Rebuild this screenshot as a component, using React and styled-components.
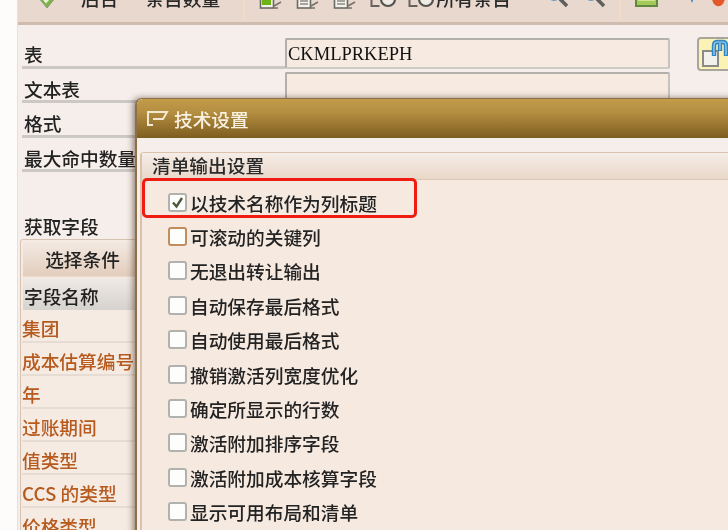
import React from 'react';
import styled, { createGlobalStyle } from 'styled-components';

//? Styling
const GlobalStyle = createGlobalStyle`
  html, body {
    margin: 0;
    padding: 0;
    background: #fdfcfb;
  }
`;

const Screen = styled.div`
  position: relative;
  width: 728px;
  height: 530px;
  overflow: hidden;
  padding-left: 17px;
  box-sizing: border-box;
  background: #fdfcfb;
  font-family: "Noto Sans CJK SC", "Noto Sans", sans-serif;
  font-size: 18.7px;
  font-weight: 500;
  color: #222;
  filter: blur(0.55px);
`;

const Page = styled.div`
  height: 100%;
  background: #f6eeeb;
  border-left: 1px solid #e9dfd9;
`;

const Toolbar = styled.div`
  display: flex;
  align-items: flex-start;
  height: 22px;
  padding-left: 19px;
  overflow: hidden;
  background: #e8d8cd;
  border-bottom: 3px solid #cfbcae;
`;

const ToolText = styled.span`
  flex: none;
  margin-top: -16px;
  margin-left: ${(p) => p.$left}px;
  line-height: 27px;
  color: #2a2a2a;
`;

const ToolIcon = styled.svg`
  flex: none;
  margin-top: ${(p) => p.$top ?? -13}px;
  margin-left: ${(p) => p.$left}px;
  width: ${(p) => p.$w}px;
  height: 24px;
`;

const ToolSep = styled.i`
  flex: none;
  width: 2px;
  height: 20px;
  margin-left: ${(p) => p.$left}px;
  background: #f2dcc6;
`;

const Form = styled.div`
  display: grid;
  grid-template-columns: 263px 385px 1fr;
  grid-auto-rows: 34.5px;
  margin-top: 9px;
  padding-left: 4px;
`;

const Label = styled.div`
  display: flex;
  align-items: center;
  padding: 8px 0 0 2px;
  height: 34.5px;
  box-sizing: border-box;
  border-bottom: 3px solid #cbc8c5;
  white-space: nowrap;
`;

const Input = styled.div`
  align-self: end;
  height: 31px;
  box-sizing: border-box;
  padding-left: 1px;
  background: #f6eae1;
  border: 2px solid #b3b0ac;
  border-right-color: #c6c3bf;
  border-bottom-color: #cfccc8;
  border-radius: 2px;
  font-family: "Liberation Serif", serif;
  font-size: 18.5px;
  font-weight: 400;
  line-height: 28px;
  color: #111;
`;

const SideButton = styled.div`
  align-self: end;
  width: 40px;
  height: 34px;
  margin: 0 0 -2px 27px;
  box-sizing: border-box;
  background: #fbf2b6;
  border: 2px solid #a9a59d;
  border-radius: 4px;
`;

const SectionTitle = styled.div`
  margin: 40px 0 0 6px;
  line-height: 28px;
`;

const FieldPanel = styled.div`
  margin: -1px 0 0 2px;
  height: 300px;
  padding: 2px 0 0 2px;
  background: #f6ebe3;
  border: 1px solid #d6c2b0;
  border-radius: 3px;
`;

const PanelTab = styled.div`
  width: 119px;
  height: 34px;
  text-align: center;
  line-height: 34px;
  background: linear-gradient(#f3e9e2, #e3cdbc);
  border-bottom: 1px solid #ead9cb;
`;

const ColumnHead = styled.div`
  height: 32px;
  line-height: 36px;
  margin-top: 1px;
  padding-left: 1px;
  background: linear-gradient(#efeae6, #d6d2ce);
`;

const FieldRow = styled.div`
  height: 33px;
  line-height: 35px;
  box-sizing: border-box;
  margin-left: -1px;
  border-bottom: 2px solid #e7dcd4;
  color: #b65a1e;
  white-space: nowrap;
`;

//* The dialog floats over the page, so it is placed absolutely
const Dialog = styled.div`
  position: absolute;
  left: 135px;
  top: 98px;
  width: 620px;
  height: 470px;
  background: #f6eeeb;
  border: 1px solid #8e7048;
  border-width: 1px 0 0 2px;
  border-radius: 7px 0 0 0;
  box-shadow: -2px 0 6px rgba(60, 40, 20, 0.55);
`;

const TitleBar = styled.div`
  display: flex;
  align-items: center;
  gap: 5px;
  height: 39px;
  padding-left: 8px;
  background: linear-gradient(#c29c4a 0%, #b48e40 35%, #7d5d20 100%);
  border-radius: 6px 0 0 0;
  color: #f8f0e0;
`;

const GroupBox = styled.div`
  margin: 14px 0 0 3px;
  border: 1px solid #d9c3ae;
  border-width: 1px 0 0 2px;
  border-radius: 4px 0 0 0;
`;

const GroupHead = styled.div`
  height: 26px;
  line-height: 24px;
  padding-left: 10px;
  background: linear-gradient(#f6ede7, #e9d8ca);
  border-bottom: 1px solid #dcc7b5;
  color: #2a2a2a;
`;

const GroupBody = styled.div`
  position: relative;
  padding: 5px 0 0 26px;
  height: 400px;
  background: #f5e9e0;
`;

const OptionRow = styled.label`
  display: flex;
  align-items: center;
  gap: 3px;
  height: 34.4px;
  color: #232323;
`;

const Box = styled.span`
  flex: none;
  display: flex;
  width: 19px;
  height: 19px;
  box-sizing: border-box;
  background: #fdfdfc;
  border: 2px solid ${(p) => (p.$focus ? '#c08d5f' : '#b1b1ae')};
  border-radius: 3px;
`;

//* Red annotation drawn on top of the first option
const Highlight = styled.div`
  position: absolute;
  left: 0;
  top: -2px;
  width: 275px;
  height: 40px;
  box-sizing: border-box;
  border: 3px solid #f01c12;
  border-radius: 5px;
`;

const options = [
  '以技术名称作为列标题',
  '可滚动的关键列',
  '无退出转让输出',
  '自动保存最后格式',
  '自动使用最后格式',
  '撤销激活列宽度优化',
  '确定所显示的行数',
  '激活附加排序字段',
  '激活附加成本核算字段',
  '显示可用布局和清单',
];

const fields = ['集团', '成本估算编号', '年', '过账期间', '值类型', 'CCS 的类型', '价格类型'];

function NoteIcon({ left, green }) {
  return (
    <ToolIcon $left={left} $w={24} viewBox="0 0 24 24">
      <rect x="1.5" y="4" width="13" height="17" fill="#f4f0ea" stroke="#6b6b66" strokeWidth="1.6" />
      <path d="M15 19 L22 15 M15 21 L19 21" stroke="#77736c" strokeWidth="1.6" fill="none" />
      {green ? (
        <rect x="3" y="8" width="9" height="10" fill="#6cb414" />
      ) : (
        <path d="M4 14 H12 M4 17 H12" stroke="#8c8a84" strokeWidth="1.4" />
      )}
    </ToolIcon>
  );
}

function GlassesIcon({ left }) {
  return (
    <ToolIcon $left={left} $w={26} $top={-14} viewBox="0 0 26 24">
      <path d="M1.5 6 V20 H9.5" fill="none" stroke="#66635e" strokeWidth="2" />
      <circle cx="18" cy="13" r="7" fill="#efece6" stroke="#55534f" strokeWidth="2.2" />
    </ToolIcon>
  );
}

function SearchIcon({ left }) {
  return (
    <ToolIcon $left={left} $w={26} $top={-16} viewBox="0 0 26 24">
      <circle cx="10" cy="8" r="7.5" fill="#e8eef2" stroke="#3c85bb" strokeWidth="2.4" />
      <path d="M16 15 L23 22" stroke="#5f5f5e" strokeWidth="3.6" />
    </ToolIcon>
  );
}

function App() {
  return (
    <>
      <GlobalStyle />
      <Screen>
        <Page>
          <Toolbar>
            <ToolIcon $left={0} $w={20} viewBox="0 0 20 24">
              <path d="M10 0 L19 10 L10 21 L1 10 Z" fill="#7fb24a" stroke="#8a9a78" />
              <path d="M5 10 L9 15 L15 8" fill="none" stroke="#e6f2d2" strokeWidth="2" />
            </ToolIcon>
            <ToolText $left={24}>后台</ToolText>
            <ToolText $left={27}>条目数量</ToolText>
            <ToolSep $left={23} />
            <NoteIcon left={14} green />
            <NoteIcon left={13} />
            <NoteIcon left={13} />
            <GlassesIcon left={13} />
            <GlassesIcon left={12} />
            <ToolText $left={2}>所有条目</ToolText>
            <SearchIcon left={33} />
            <SearchIcon left={11} />
            <ToolSep $left={12} />
            <ToolIcon $left={14} $w={23} $top={-17} viewBox="0 0 23 24">
              <rect x="1" y="12" width="21" height="11" fill="#a4c85a" stroke="#5f8a3c" strokeWidth="2" />
              <rect x="3" y="15" width="17" height="3" fill="#cfe48c" />
            </ToolIcon>
            <ToolIcon $left={29} $w={10} $top={-19} viewBox="0 0 10 24">
              <path d="M1 12 H9 L5 22 Z" fill="#3a88c4" />
            </ToolIcon>
            <ToolIcon $left={14} $w={16} $top={-15} viewBox="0 0 16 24">
              <path d="M1 12 H15 L12 19 Q8 23 4 20 Q1 18 1 12 Z" fill="#e4592a" />
            </ToolIcon>
          </Toolbar>

          <Form>
            <Label>表</Label>
            <Input>CKMLPRKEPH</Input>
            <SideButton>
              <svg width="31" height="30" viewBox="0 0 31 30">
                <rect x="4" y="12" width="15" height="15" fill="#f3f1ec" stroke="#8a8a86" strokeWidth="2" />
                <path d="M15 17 V7 Q15 3 18 3 H24 Q27 3 27 7 V17 M21 3 V12" fill="none" stroke="#2f86c2" strokeWidth="4.4" />
                <path d="M15 16 V7 Q15 3 18 3 H24 Q27 3 27 7 V16 M21 4 V11" fill="none" stroke="#a9d6ee" strokeWidth="1.2" />
              </svg>
            </SideButton>
            <Label>文本表</Label>
            <Input />
            <span />
            <Label>格式</Label>
            <span />
            <span />
            <Label>最大命中数量</Label>
          </Form>

          <SectionTitle>获取字段</SectionTitle>
          <FieldPanel>
            <PanelTab>选择条件</PanelTab>
            <ColumnHead>字段名称</ColumnHead>
            {fields.map((name) => (
              <FieldRow key={name}>{name}</FieldRow>
            ))}
          </FieldPanel>
        </Page>

        <Dialog>
          <TitleBar>
            <svg width="24" height="20" viewBox="0 0 24 20">
              <path d="M8 16 H3 V3 H22 L18 10 H8" fill="none" stroke="#f3e9d2" strokeWidth="2" />
            </svg>
            技术设置
          </TitleBar>
          <GroupBox>
            <GroupHead>清单输出设置</GroupHead>
            <GroupBody>
              <Highlight />
              {options.map((text, i) => (
                <OptionRow key={text}>
                  <Box $focus={i === 1}>
                    {i === 0 && (
                      <svg width="15" height="15" viewBox="0 0 15 15">
                        <path d="M3 7.5 L6.5 11.5 L12 3" fill="none" stroke="#4c5a3c" strokeWidth="2.4" />
                      </svg>
                    )}
                  </Box>
                  {text}
                </OptionRow>
              ))}
            </GroupBody>
          </GroupBox>
        </Dialog>
      </Screen>
    </>
  );
}

export default App;
